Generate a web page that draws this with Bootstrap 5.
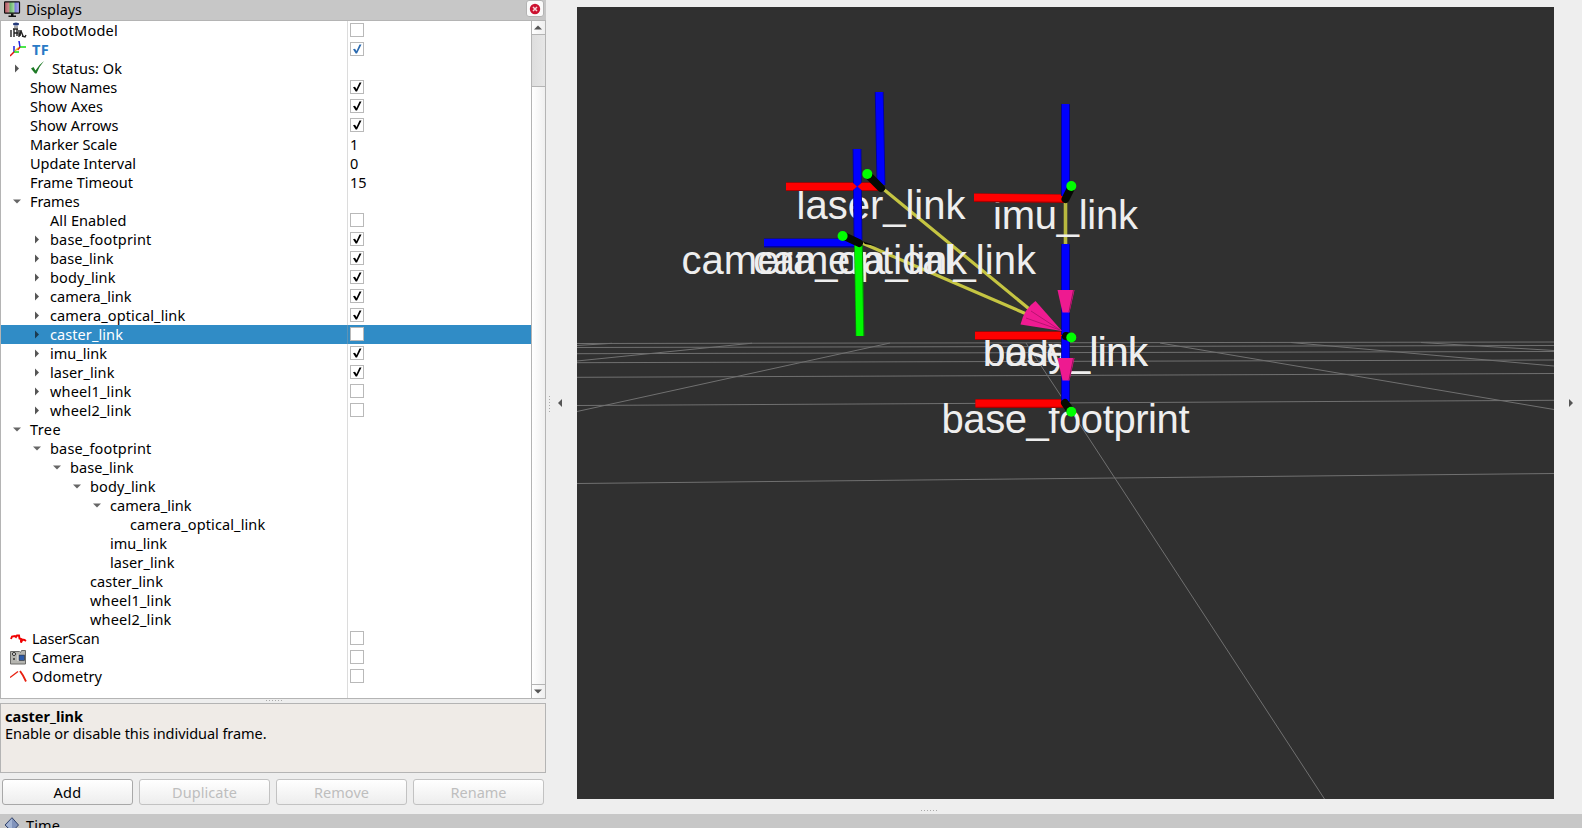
<!DOCTYPE html>
<html lang="en">
<head>
<meta charset="utf-8">
<title>RViz</title>
<link href="https://cdn.jsdelivr.net/npm/bootstrap@5.3.0/dist/css/bootstrap.min.css" rel="stylesheet">
<style>
body{font:14.5px/19px "Noto Sans",sans-serif;background:#eeeeee;color:#000;width:1582px;height:828px;overflow:hidden}
.fit{white-space:nowrap;display:inline-block}
.upper{height:814px}
.left-pane{width:546px}
.titlebar{height:20px;background:#c7c7c7;padding:0 0 1px 4px}
.titlebar svg{display:block}
.titlebar .fit{margin-left:5px}
.closebtn{width:18px;height:17px;margin-right:2px;margin-top:-2px;border:1px solid #b4b4b4;border-radius:3px;background:#fafafa}
.tree-box{height:679px;border:1px solid #b4b4b4;background:#fff}
.tree-rows{width:530px;background:linear-gradient(#dcdcdc,#dcdcdc) 346px 0/1px 100% no-repeat}
.trow{height:19px}
.trow.sel{background:#308cc6;color:#fff}
.name-cell{width:346px}
.val-cell{padding-left:2px;width:184px;border-left:1px solid #dcdcdc}
.sel .val-cell{border-left-color:#5d93b6}
.twist{width:20px;height:19px;flex:none}
.cbx{width:14px;height:14px;border:1px solid #b9b9b9;background:#fff;display:block;margin-top:2px}
.vbar{width:14px;border-left:1px solid #b4b4b4;background:linear-gradient(90deg,#fff,#efefef)}
.vbtn{height:13px}
.vbtn.down{height:14px;border-top:1px solid #b4b4b4}
.vthumb{height:53px;background:linear-gradient(90deg,#dedede,#e6e6e6);border:solid #b4b4b4;border-width:1px 0}
.split{height:4px}
.help{height:70px;border:1px solid #b4b4b4;background:#efebe7;padding:4px 4px;line-height:17px}
.btns{padding:6px 2px 0;gap:6px;height:32px}
.btns .btn{height:26px;padding:0;font-size:14.5px;line-height:22px;border:1px solid #a8a8a8;border-radius:3px;background:linear-gradient(#fff,#ededed);color:#000}
.btns .btn:disabled{border-color:#c2c2c2;color:#bebebe;opacity:1}
.handle-l{width:31px;padding-bottom:6px}
.handle-r{width:28px;padding-bottom:6px}
.scene{width:977px;height:792px;background:#303030;margin-top:7px}
.scene svg{display:block}
.grip{margin-left:343px}
.lbl{font:40px "Liberation Sans",sans-serif;fill:#eeeeee}
.timebar{height:14px;background:#c7c7c7;overflow:hidden;padding-left:4px}
.timebar svg{margin-top:3px}
.timebar .fit{margin:2px 0 0 6px}
.tf-name{color:#2a7ac6;font-weight:700}
.top-icon{width:31px;padding-left:9px}
</style>
<script src="https://cdn.jsdelivr.net/npm/bootstrap@5.3.0/dist/js/bootstrap.bundle.min.js"></script>
</head>
<body>
<div class="d-flex flex-column">
<div class="upper d-flex">
  <div class="left-pane d-flex flex-column">
    <div class="titlebar d-flex align-items-center">
      <svg width="17" height="17" viewBox="0 0 17 17"><defs><linearGradient id="mon"><stop offset="0" stop-color="#b05560"/><stop offset=".3" stop-color="#cc8f90"/><stop offset=".36" stop-color="#65b268"/><stop offset=".63" stop-color="#a3d8a0"/><stop offset=".7" stop-color="#7777d8"/><stop offset="1" stop-color="#b6b6f2"/></linearGradient></defs><rect x=".5" y=".8" width="15" height="11.4" rx=".8" fill="url(#mon)" stroke="#111" stroke-width="1.2"/><path d="M7 12.500h2.500v2h2.500v1.500H4.500v-1.500H7z" fill="#111"/></svg>
      <span class="fit" data-w="55">Displays</span>
      <span class="closebtn ms-auto d-flex align-items-center justify-content-center"><svg width="12" height="12" viewBox="0 0 12 12"><circle cx="6" cy="6" r="5.200" fill="#cc1230"/><path d="M4 4l4 4M8 4l-4 4" stroke="#f6d4d9" stroke-width="1.500"/></svg></span>
    </div>
    <div class="tree-box d-flex">
      <div class="tree-rows" id="tree"></div>
      <div class="vbar d-flex flex-column">
        <div class="vbtn"><svg class="d-block" width="13" height="13"><path d="M2 8.500h8l-4-4z" fill="#555"/></svg></div>
        <div class="vthumb"></div>
        <div class="vbtn down mt-auto"><svg class="d-block" width="13" height="12"><path d="M2 4.500h8l-4 4z" fill="#555"/></svg></div>
      </div>
    </div>
    <div class="split d-flex justify-content-center"><svg width="18" height="4"><path d="M2 1.500h16" stroke="#aaa" stroke-dasharray="1 2"/></svg></div>
    <div class="help"><b class="fit" data-w="77">caster_link</b><br><span class="fit" data-w="260.5">Enable or disable this individual frame.</span></div>
    <div class="btns d-flex">
      <button class="btn flex-fill w-25"><span class="fit" data-w="27">Add</span></button>
      <button class="btn flex-fill w-25" disabled><span class="fit" data-w="64">Duplicate</span></button>
      <button class="btn flex-fill w-25" disabled><span class="fit" data-w="54">Remove</span></button>
      <button class="btn flex-fill w-25" disabled><span class="fit" data-w="55">Rename</span></button>
    </div>
  </div>
  <div class="handle-l d-flex align-items-center"><svg width="31" height="24" viewBox="0 0 31 24"><path d="M3.500 4v17" stroke="#aaa" stroke-dasharray="1 2"/><path d="M16 7v8l-4-4z" fill="#555"/></svg></div>
  <div class="d-flex flex-column">
  <div class="scene"><svg width="977" height="792" viewBox="577 7 977 792">
    <g stroke="#707070" stroke-width="1" fill="none">
      <path d="M577 343.500L1554 342M577 347.500L1554 345.500M577 353.700L1554 351.500M577 362.700L1554 360M577 377.300L1554 373.500M577 405.500L1554 400.300M577 483.500L1554 473.500"/>
      <path d="M577 345.500l35-2.200M577 361l175-17.800M577 411.500L890 343M1160 343L1554 409.500M1291 342.500L1554 366M1421 342.500L1554 350.500M1026 343L1090 440L1324.500 799"/>
    </g>
    <g fill="none">
      <path d="M884.500 190L1050 326M862 243L1045 322" stroke="#c5c542" stroke-width="3.200"/>
      <path d="M1065.500 200v46" stroke="#b9b93f" stroke-width="3.600"/>
    </g>
    <g class="lbl">
      <text x="796.500" y="218.800" textLength="169">laser_link</text>
      <text x="681.500" y="274.300" textLength="354.500">camera_optical_link</text>
      <text x="753" y="274.300" textLength="214">camera_link</text>
      <text x="993" y="229.100" textLength="145">imu_link</text>
      <text x="983" y="366.400" textLength="165">base_link</text>
      <text x="983" y="366.400" textLength="165">body_link</text>
      <text x="941.500" y="433.400" textLength="248">base_footprint</text>
    </g>
    <g fill="none" stroke-width="8.800">
      <path d="M786 186.700h93M974 197.700l91 1M975 335.700h90M975.500 403.500h90" stroke="#a90000"/>
      <path d="M786 186.400h93M974 197.200l91 1M975 335.400h90M975.500 403.200h90" stroke="#fe0000" stroke-width="7"/>
      <path d="M879.200 92l1.800 93M857 149l1 92M764 243h93M1065.500 104v92M1065.500 244v91M1065.500 336v66" stroke="#0000a0"/>
      <path d="M879.200 92l1.800 93M857 149l1 92M764 242.600h93M1065.500 104v92M1065.500 244v91M1065.500 336v66" stroke="#0000fe" stroke-width="7"/>
      <path d="M858.500 245l1.500 91" stroke="#009000"/><path d="M858.300 245l1.500 91" stroke="#00f800" stroke-width="7"/>
      <path d="M852.500 182.500l4.500 4-4.500 4zM862 182.500l-4.500 4 4.500 4z" fill="#fe0000"/>
    </g>
    <path d="M862 241l14 5-11-2z" fill="#050a03"/>
    <g stroke="#050a03" stroke-width="8" stroke-linecap="round"><path d="M868 175l13 13M844 236l15 7M1071 188l-5.500 11M1070 337l-4-1M1070 410l-5-7"/></g>
    <path d="M1035.500 301Q1024 309 1020.500 324.500L1062 331z" fill="#f01b92"/><path d="M1031 311l29 19M1026 318l34 12" stroke="#aa1268" stroke-width=".8"/>
    <path d="M1057.500 290h17l-5 22.500h-7z" fill="#ee1a90"/><path d="M1073.500 290l-4.500 22" stroke="#951359"/>
    <path d="M1057.500 358h17l-5 22.500h-7z" fill="#ee1a90"/><path d="M1073.500 358l-4.500 22" stroke="#951359"/>
    <g fill="#00fe00"><circle cx="867.300" cy="174" r="5"/><circle cx="842.600" cy="236" r="5"/><circle cx="1071.300" cy="186" r="5"/><circle cx="1071.300" cy="337.500" r="5"/><circle cx="1071.300" cy="411.700" r="5"/></g>
  </svg></div>
  <svg class="grip mt-auto" width="20" height="6"><path d="M1 2.500h17" stroke="#aaa" stroke-dasharray="1 2"/></svg>
  </div>
  <div class="handle-r d-flex align-items-center"><svg width="28" height="24"><path d="M15 7v8l4-4z" fill="#555"/></svg></div>
</div>
<div class="timebar d-flex"><svg width="16" height="16" viewBox="0 0 16 16" class="flex-shrink-0"><path d="M8 .7L14.500 8 8 15 1 8z" fill="#8193bb" stroke="#32436b"/><path d="M8 1.500v12L2 8z" fill="#a3b4d4"/></svg><span class="fit" data-w="33">Time</span></div>
</div>
<script>
const icons={
 robot:'<svg width="17" height="17" viewBox="0 0 17 17"><ellipse cx="6" cy="2" rx="3" ry="1.500" fill="#233a7a"/><path d="M4 4h4v2H4z" fill="#aaa"/><path d="M1 8v7M3 7h5M4 7v8M7 7v7M9 8v7M4 11h4M11 8l-1 6M11 9l2 5M12 14l3 1 1-2" stroke="#222" stroke-width="1.400" fill="none"/></svg>',
 tf:'<svg width="17" height="17" viewBox="0 0 17 17" fill="none" stroke-width="1.500"><path d="M4 5v6M9 0l1 6" stroke="#2020e0"/><path d="M4 11h5M10 6h6" stroke="#10e010"/><path d="M4 11l-4 4M10 6L7.500 9" stroke="#e01010"/><path d="M5 10l3-3" stroke="#e8c020"/></svg>',
 laser:'<svg width="17" height="17" viewBox="0 0 17 17"><path d="M1 9l1-2.500 3-.5 1 1 1-1.500h2l.5 3 1.500.5v3.500l1.500-3 2 .5 1.500 1" fill="none" stroke="#f00000" stroke-width="1.900"/></svg>',
 camera:'<svg width="17" height="17" viewBox="0 0 17 17"><path d="M.5 2.500h9l1 1 1-2h4v13.500H.5z" fill="#b5b5b0" stroke="#6a6a68"/><circle cx="4" cy="5" r="1.500" fill="#fff" stroke="#222"/><circle cx="4" cy="10" r="1" fill="#333"/><rect x="7.500" y="5.500" width="7" height="6.500" fill="#eee"/><rect x="9" y="6" width="5.500" height="5.500" fill="#2c5aa8" stroke="#333" stroke-width=".7"/></svg>',
 odom:'<svg width="17" height="17" viewBox="0 0 17 17" stroke="#e82010" fill="none"><path d="M0 9.500L6 5l2-1.500" stroke-width="1.400"/><path d="M10 3l3 4.500 3 6" stroke-width="1.800"/></svg>'
};
// indent level, label, label width, checkbox (0/1) or value, twisty (r/d), icon
const rows=[
[0,'RobotModel',85,0,'','robot'],[0,'TF',16,1,'','tf'],[0,'Status: Ok',69,null,'r','ok'],
[0,'Show Names',86,1],[0,'Show Axes',72,1],[0,'Show Arrows',87.500,1],[0,'Marker Scale',86,'1'],[0,'Update Interval',105,'0'],[0,'Frame Timeout',102,'15'],
[0,'Frames',48.500,null,'d'],[1,'All Enabled',75.500,0],[1,'base_footprint',100.500,1,'r'],[1,'base_link',62.500,1,'r'],[1,'body_link',64.500,1,'r'],[1,'camera_link',80.500,1,'r'],[1,'camera_optical_link',134.300,1,'r'],[1,'caster_link',72,0,'r'],[1,'imu_link',56,1,'r'],[1,'laser_link',63.500,1,'r'],[1,'wheel1_link',80.500,0,'r'],[1,'wheel2_link',80.500,0,'r'],
[0,'Tree',30,null,'d'],[1,'base_footprint',100.500,null,'d'],[2,'base_link',62.500,null,'d'],[3,'body_link',64.500,null,'d'],[4,'camera_link',80.500,null,'d'],[5,'camera_optical_link',134.300,null],[4,'imu_link',56,null],[4,'laser_link',63.500,null],[3,'caster_link',72,null],[3,'wheel1_link',80.500,null],[3,'wheel2_link',80.500,null],
[0,'LaserScan',66.500,0,'','laser'],[0,'Camera',51,0,'','camera'],[0,'Odometry',69,0,'','odom']];
document.getElementById('tree').innerHTML=rows.map((r,i)=>{
 const [lv,t,w,v,tw,ic]=r, top=ic&&ic!=='ok', sel=i===16, tf=t==='TF';
 const fill=sel?'#1b3a50':'#555';
 const twist=tw==='r'?`<path d="M5 5.500v8l4-4z" fill="${fill}"/>`:tw==='d'?'<path d="M3 7.500h8l-4 4z" fill="#666"/>':'';
 const lead=top?`<span class="top-icon d-flex flex-shrink-0">${icons[ic]}</span>`:
  `<svg class="twist" style="margin-left:${9+lv*20}px">${twist}</svg>`+(ic==='ok'?'<svg width="22" height="19" class="flex-shrink-0"><path d="M1 9.500l2.500-1.500 2 3.500Q8.500 6 14 2 9 7.500 6.500 14.500H5Z" fill="#1e7a26"/></svg>':'');
 const val=v===null?'':typeof v==='string'?v:`<span class="cbx">${v?`<svg class="d-block" width="12" height="12"><path d="M2 6.200l2-.5 1.500 2.300L8.500 1.500h2L6 10.500H4.700z" fill="${tf?'#2a6ab0':'#000'}"/></svg>`:''}</span>`;
 return `<div class="trow d-flex ${sel?'sel':''}"><div class="name-cell d-flex align-items-center">${lead}<span class="fit ${tf?'tf-name':''}" data-w="${w}">${t}</span></div><div class="val-cell">${val}</div></div>`}).join('');
// spread each label to its nominal width
document.querySelectorAll('.fit').forEach(e=>{const g=document.createRange();g.selectNodeContents(e);const n=g.getBoundingClientRect().width;e.style.letterSpacing=((+e.dataset.w+1-n)/e.textContent.length)+'px'});
</script>
</body>
</html>
